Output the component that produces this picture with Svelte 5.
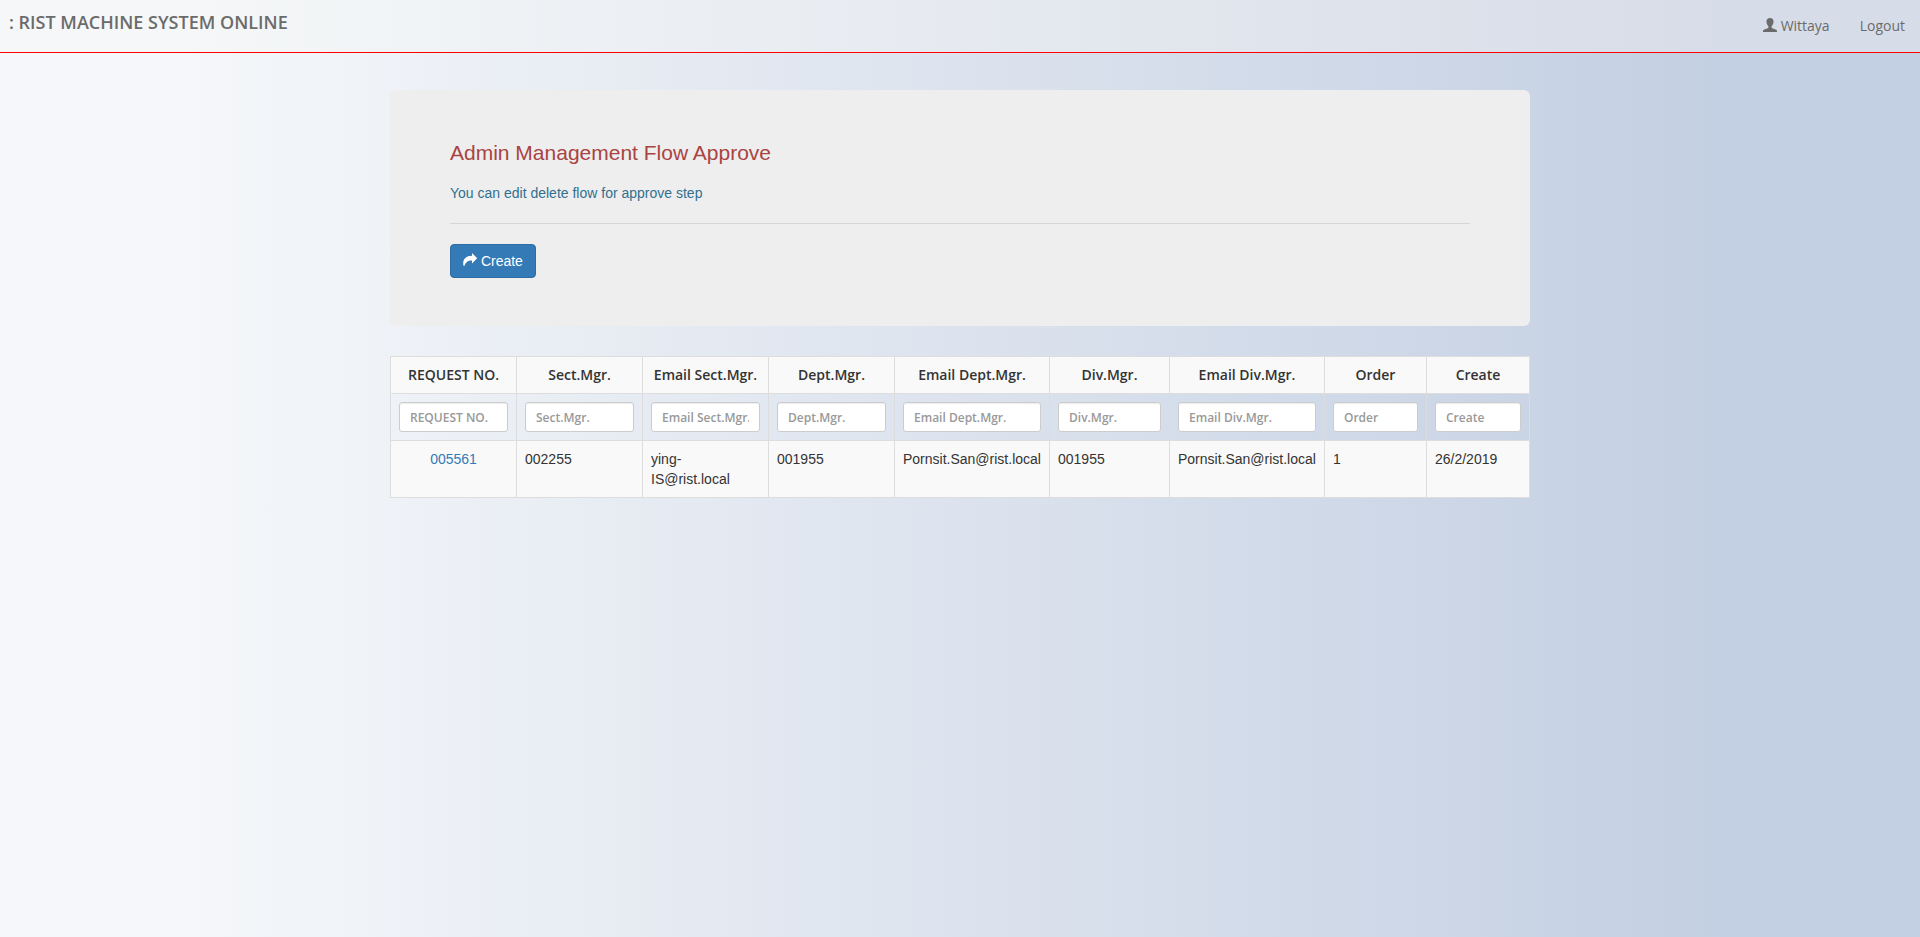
<script>
  const columns = [
    { label: 'REQUEST NO.', weight: 126, value: '005561' },
    { label: 'Sect.Mgr.', weight: 126, value: '002255' },
    { label: 'Email Sect.Mgr.', weight: 126, value: 'ying-IS@rist.local' },
    { label: 'Dept.Mgr.', weight: 126, value: '001955' },
    { label: 'Email Dept.Mgr.', weight: 155, value: 'Pornsit.San@rist.local' },
    { label: 'Div.Mgr.', weight: 120, value: '001955' },
    { label: 'Email Div.Mgr.', weight: 155, value: 'Pornsit.San@rist.local' },
    { label: 'Order', weight: 102, value: '1' },
    { label: 'Create', weight: 103, value: '26/2/2019' }
  ];
  const total = columns.reduce((sum, c) => sum + c.weight, 0);
  let filters = $state(columns.map(() => ''));
</script>

<header class="navbar">
  <a class="brand" href="#home">: RIST MACHINE SYSTEM ONLINE</a>
  <nav>
    <a href="#user">
      <svg class="icon" viewBox="0 0 14 14" aria-hidden="true">
        <path d="M7 0C4.7 0 3.500 1.400 3.500 3.400c0 1.300.2 2.300.7 3.200.3.700.9 1.200 1.200 1.700v1.200C5.200 10.100 4 10.600 2.600 11.100 1 11.700 0 12.100 0 13v1h14v-1c0-.9-1-1.300-2.600-1.900C10 10.600 8.800 10.100 8.600 9.500V8.300c.3-.5.9-1 1.200-1.700.5-.9.7-1.900.7-3.200C10.500 1.400 9.300 0 7 0z" />
      </svg>
      Wittaya</a>
    <a href="#logout">Logout</a>
  </nav>
</header>

<main>
  <section class="jumbotron">
    <h1>Admin Management Flow Approve</h1>
    <p>You can edit delete flow for approve step</p>
    <hr />
    <button type="button">
      <svg class="icon" viewBox="0 0 14 14" aria-hidden="true">
        <path d="M9 0 14.200 5.200 9 10.400V7.400C5.500 7.300 2.800 8.400 1.400 13L.4 12.600C-.6 6.800 2.200 2.900 9 2.800z" />
      </svg>
      Create</button>
  </section>

  <table>
    <colgroup>
      {#each columns as column}
        <col style="width: {(column.weight / total) * 100}%" />
      {/each}
    </colgroup>
    <thead>
      <tr class="titles">
        {#each columns as column}
          <th scope="col">{column.label}</th>
        {/each}
      </tr>
      <tr>
        {#each columns as column, i}
          <td><input type="text" placeholder={column.label} aria-label={column.label} bind:value={filters[i]} /></td>
        {/each}
      </tr>
    </thead>
    <tbody>
      <tr>
        {#each columns as column, i}
          {#if i === 0}
            <td class="request"><a href="#request">{column.value}</a></td>
          {:else}
            <td>{column.value}</td>
          {/if}
        {/each}
      </tr>
    </tbody>
  </table>
</main>

<style>
  :global(html) {
    min-height: 100%;
    background: linear-gradient(to right, #f5f7fa 10%, #c3cfe2 90%);
  }

  :global(body) {
    margin: 0;
    color: #333;
    font: 14px/20px "Liberation Sans", Arial, sans-serif;
  }

  .navbar {
    display: flex;
    justify-content: space-between;
    align-items: center;
    height: 52px;
    border-bottom: 1px solid #f00;
    background: linear-gradient(to right, #f5f7f8 10%, #d7dde8 90%);
    font-family: "Open Sans", sans-serif;
  }

  .navbar a {
    color: #6b6b6b;
    text-decoration: none;
  }

  .brand {
    padding: 0 9px 8px;
    font-size: 18px;
    font-weight: 600;
  }

  nav {
    display: flex;
    gap: 30px;
    padding-right: 15px;
  }

  .icon {
    width: 14px;
    height: 14px;
    fill: currentColor;
    overflow: visible;
    vertical-align: -1px;
  }

  main {
    max-width: 1140px;
    margin: 37px auto 0;
  }

  .jumbotron {
    padding: 48px 60px;
    margin-bottom: 30px;
    border-radius: 6px;
    background: #eee;
  }

  h1 {
    margin: 0 0 15px;
    color: #a94442;
    font-size: 21px;
    line-height: 30px;
    font-weight: 400;
  }

  p {
    margin: 0;
    color: #31708f;
  }

  hr {
    margin: 20px 0;
    border: 0;
    border-top: 1px solid #d5d5d5;
  }

  button {
    display: block;
    padding: 6px 12px;
    border: 1px solid #2e6da4;
    border-radius: 4px;
    background: #337ab7;
    color: #fff;
    font: inherit;
    cursor: pointer;
  }

  table {
    width: 100%;
    table-layout: fixed;
    border-collapse: collapse;
  }

  th,
  td {
    padding: 8px;
    border: 1px solid #ddd;
    vertical-align: top;
    text-align: left;
  }

  th {
    font-family: "Open Sans", sans-serif;
    font-weight: 600;
    text-align: center;
    white-space: nowrap;
  }

  .titles,
  tbody tr {
    background: #f9f9f9;
  }

  .request {
    text-align: center;
  }

  .request a {
    color: #337ab7;
    text-decoration: none;
  }

  input {
    display: block;
    box-sizing: border-box;
    width: 100%;
    height: 30px;
    padding: 5px 10px;
    border: 1px solid #ccc;
    border-radius: 3px;
    background: #fff;
    box-shadow: inset 0 1px 1px rgba(0, 0, 0, 0.075);
    color: #555;
    font: 600 12px/18px "Open Sans", sans-serif;
  }

  input::placeholder {
    color: #999;
    opacity: 1;
  }
</style>
